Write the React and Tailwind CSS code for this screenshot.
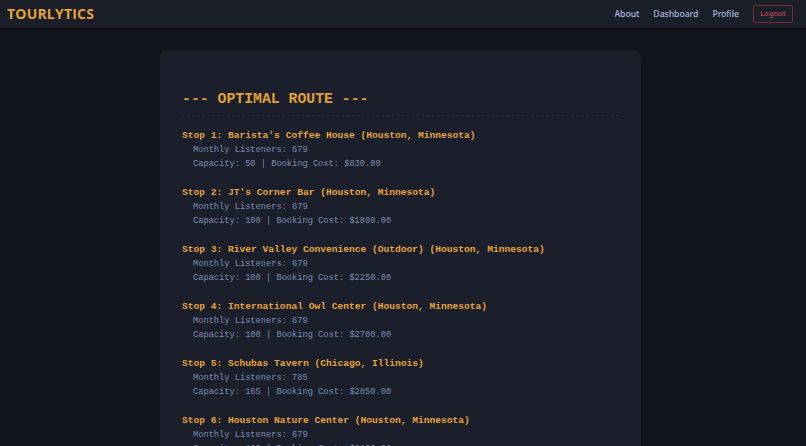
import React from "react";

const stops = [
  { n: 1, name: "Barista's Coffee House (Houston, Minnesota)", listeners: 679, cap: 50, cost: "$830.00" },
  { n: 2, name: "JT's Corner Bar (Houston, Minnesota)", listeners: 679, cap: 100, cost: "$1800.00" },
  { n: 3, name: "River Valley Convenience (Outdoor) (Houston, Minnesota)", listeners: 679, cap: 100, cost: "$2250.00" },
  { n: 4, name: "International Owl Center (Houston, Minnesota)", listeners: 679, cap: 100, cost: "$2700.00" },
  { n: 5, name: "Schubas Tavern (Chicago, Illinois)", listeners: 785, cap: 165, cost: "$2850.00" },
  { n: 6, name: "Houston Nature Center (Houston, Minnesota)", listeners: 679, cap: 100, cost: "$2100.00" },
];

export default function App() {
  return (
    <div className="h-[446px] overflow-hidden bg-[#11141b] font-['Open_Sans',sans-serif]">
      <header className="h-[28px] bg-[#1a1e29] flex items-center justify-between pl-[7px] pr-[13px] shadow-[0_1px_2px_rgba(0,0,0,0.4)]">
        <div className="text-[14px] font-bold text-[#e6a23a] tracking-[0.2px] leading-none">TOURLYTICS</div>
        <nav className="flex items-center text-[8.6px] font-medium text-[#aebbe0] font-['Noto_Sans',sans-serif]">
          <span className="mr-[14px]">About</span>
          <span className="mr-[14px]">Dashboard</span>
          <span className="mr-[14px]">Profile</span>
          <span className="w-[40px] h-[18px] flex items-center justify-center border border-[#7c2a36] rounded-[2px] text-[7.5px] text-[#c84554]">Logout</span>
        </nav>
      </header>
      <main className="flex justify-center pt-[22px] pr-[5px]">
        <div className="w-[481px] rounded-[8px] bg-[#1a1f2b] px-[22px] pt-[39px] pb-[20px] font-['Liberation_Mono',monospace]">
          <div className="text-[14.8px] font-bold text-[#e3a03a] leading-[20px] whitespace-pre">--- OPTIMAL ROUTE ---</div>
          <div className="mt-[6px] border-t border-dashed border-[#262c39]"></div>
          <div className="mt-[12px] flex flex-col gap-[14px]">
            {stops.map((s) => (
              <div key={s.n}>
                <div className="text-[9.6px] font-bold text-[#e8a33c] leading-[15px] whitespace-pre">{`Stop ${s.n}: ${s.name}`}</div>
                <div className="pl-[11px] text-[8.7px] text-[#7e8db4] leading-[14px] whitespace-pre">{`Monthly Listeners: ${s.listeners}`}</div>
                <div className="pl-[11px] text-[8.7px] text-[#7e8db4] leading-[14px] whitespace-pre">{`Capacity: ${s.cap} | Booking Cost: ${s.cost}`}</div>
              </div>
            ))}
          </div>
        </div>
      </main>
    </div>
  );
}
